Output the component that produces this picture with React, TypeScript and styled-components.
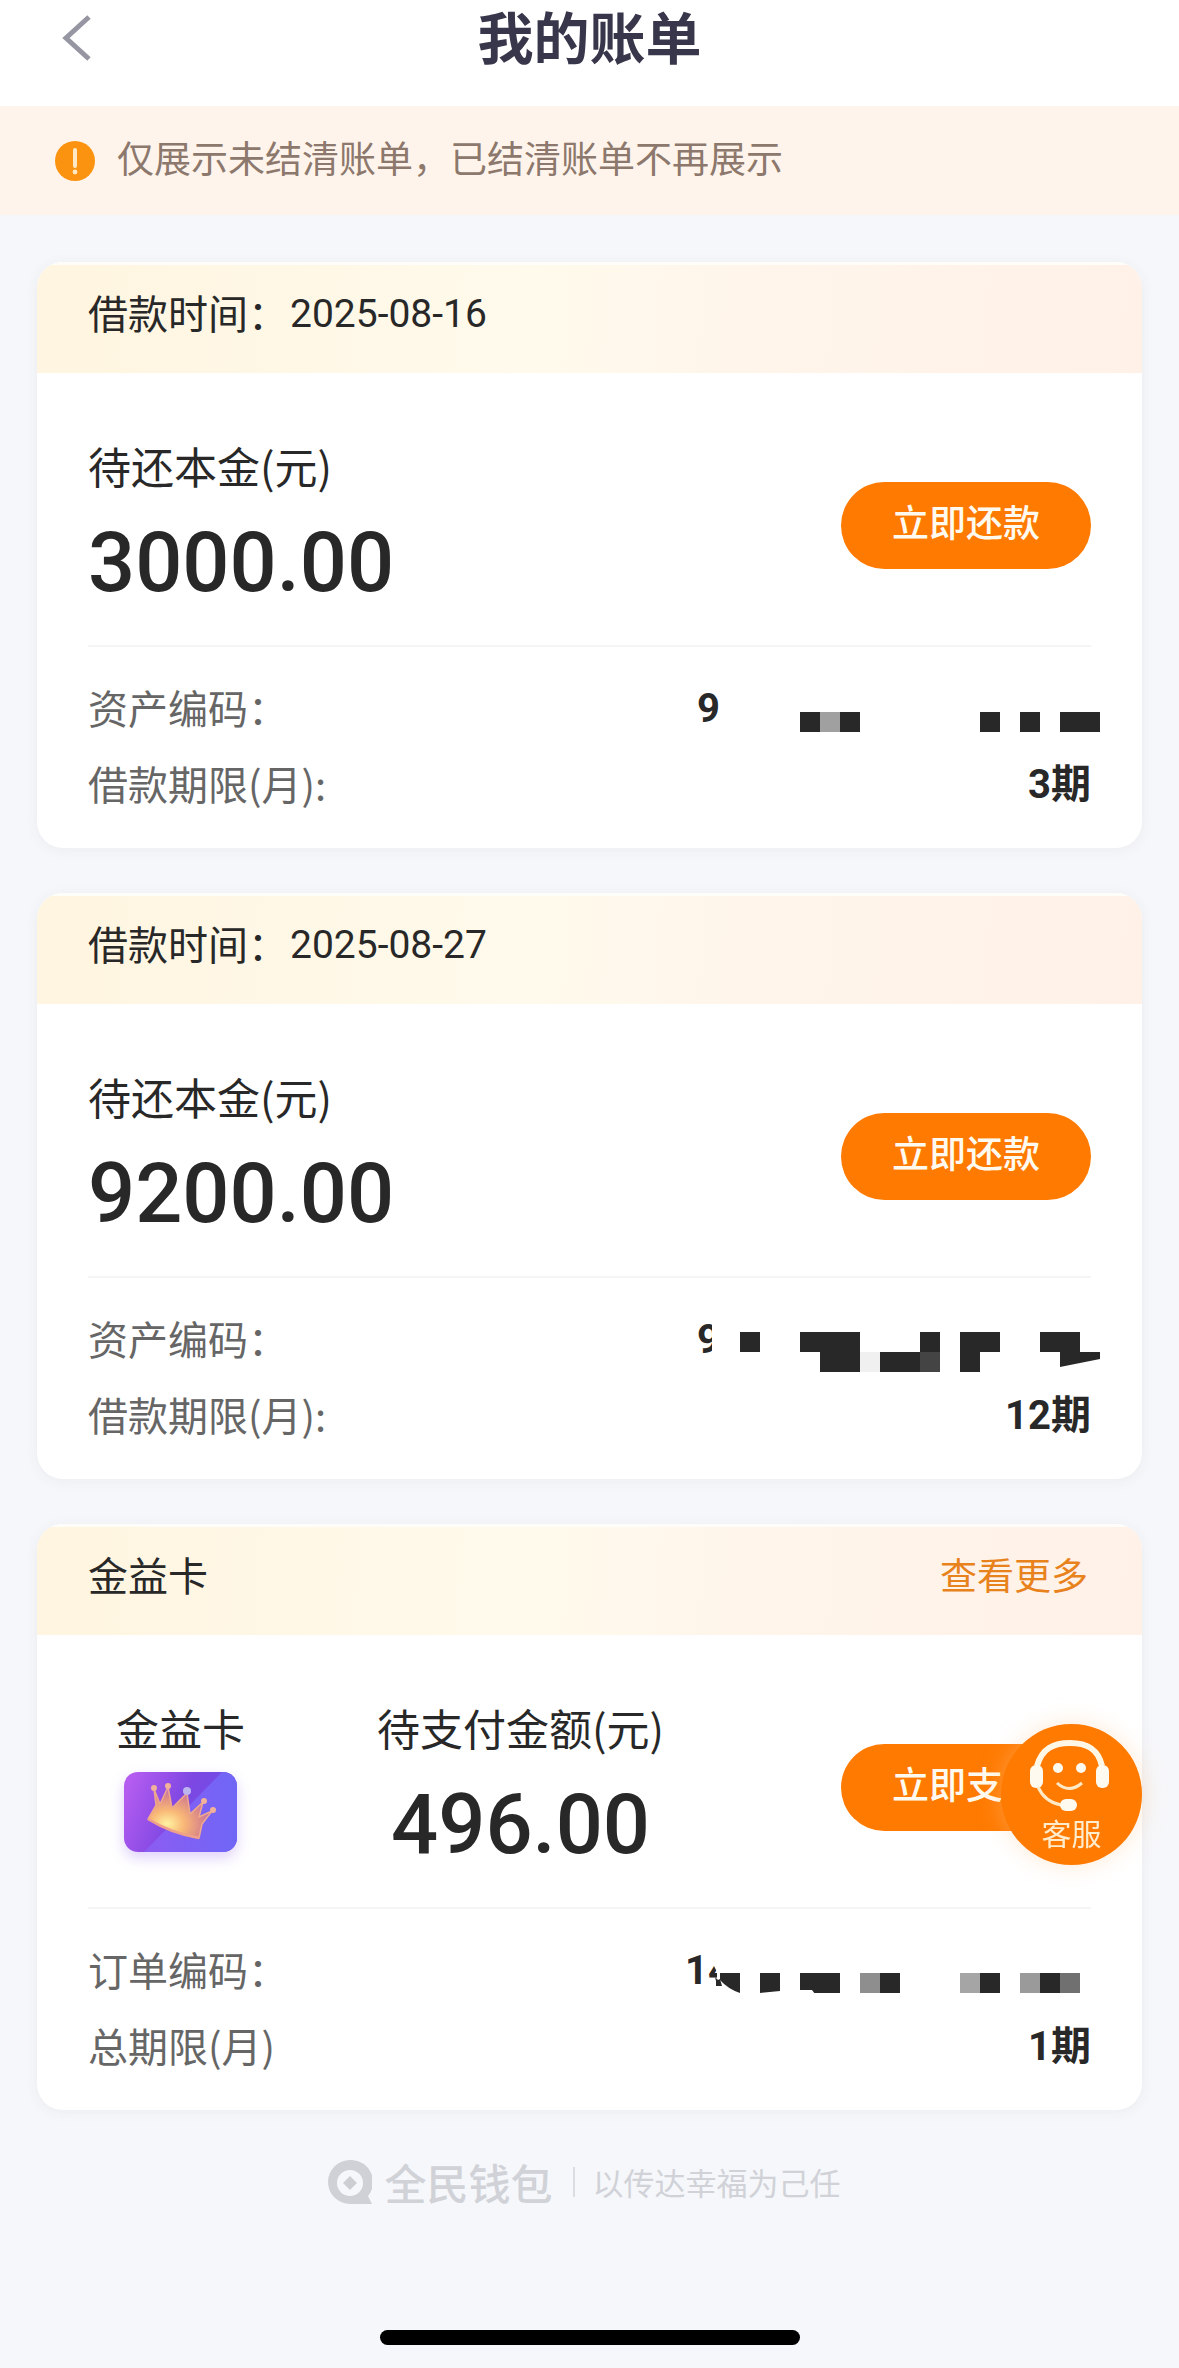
import React from "react";
import styled, { createGlobalStyle } from "styled-components";

const GlobalStyle = createGlobalStyle`
  * { box-sizing: border-box; }
  body {
    margin: 0;
    background: #f6f7fa;
    font-family: "Noto Sans CJK SC", sans-serif;
    color: #282828;
  }
  button { font: inherit; border: 0; padding: 0; cursor: pointer; }
  p, h1, h2, dl, dd, dt { margin: 0; font-weight: 400; }
`;

const Page = styled.div`
  display: flex;
  flex-direction: column;
  min-height: 100vh;
`;

const TopBar = styled.header`
  display: grid;
  grid-template-columns: 100px 1fr 100px;
  align-items: center;
  height: 106px;
  padding-bottom: 36px;
  background: #fff;
`;

const BackButton = styled.button`
  display: flex;
  justify-content: flex-end;
  padding: 6px 8px 0 0;
  background: none;
`;

const Title = styled.h1`
  font-size: 56px;
  line-height: 60px;
  font-weight: 700;
  text-align: center;
  color: #37364a;
`;

const Notice = styled.section`
  display: flex;
  align-items: center;
  gap: 22px;
  height: 109px;
  padding: 0 55px;
  background: #fff4eb;
`;

const NoticeText = styled.p`
  font-size: 37px;
  line-height: 48px;
  padding-bottom: 8px;
  color: #8c786c;
`;

const CardList = styled.main`
  display: flex;
  flex-direction: column;
  gap: 45px;
  padding: 47px 37px 0;
`;

const Card = styled.section`
  border-radius: 26px;
  background: #fff;
  box-shadow: 0 2px 14px rgba(60, 70, 90, 0.06);
  overflow: hidden;
`;

const CardHeader = styled.div`
  display: flex;
  justify-content: space-between;
  align-items: center;
  height: 111px;
  padding: 0 51px 15px;
  border-top: 3px solid #fffdfa;
  background: linear-gradient(95deg, #fff5e0 0%, #fffaec 45%, #fff5eb 65%, #fff1e8 100%);
`;

const CardTitle = styled.h2`
  display: flex;
  align-items: center;
  font-size: 40px;
  line-height: 48px;
`;

const DateText = styled.time`
  margin: 4px 0 0 2px;
  font-family: Roboto, sans-serif;
  font-size: 39px;
`;

const MoreLink = styled.a`
  padding-right: 3px;
  font-size: 37px;
  line-height: 48px;
  color: #e8821c;
  text-decoration: none;
`;

const Summary = styled.div`
  display: flex;
  align-items: center;
  height: 274px;
  margin: 0 51px;
  padding-top: 32px;
  border-bottom: 2px solid #f5f5f6;
`;

const Product = styled.div`
  display: flex;
  flex-direction: column;
  align-items: center;
  gap: 20px;
  margin: 0 132px 0 28px;
  padding-bottom: 20px;
`;

const AmountBlock = styled.div<{ $centered?: boolean }>`
  display: flex;
  flex-direction: column;
  align-items: ${(p) => (p.$centered ? "center" : "flex-start")};
  gap: 25px;
`;

const Label = styled.p`
  font-size: 43px;
  line-height: 50px;
`;

const Amount = styled.p`
  font-family: Roboto, sans-serif;
  font-size: 83px;
  line-height: 96px;
  font-weight: 500;
`;

const PayButton = styled.button`
  width: 250px;
  height: 87px;
  margin-left: auto;
  padding-bottom: 8px;
  border-radius: 44px;
  background: #ff7a00;
  color: #fffaf0;
  font-size: 37px;
  font-weight: 500;
`;

const Details = styled.dl`
  padding: 24px 51px 25px;
`;

const DetailRow = styled.div`
  display: flex;
  justify-content: space-between;
  align-items: center;
  height: 76px;
`;

const Term = styled.dt`
  padding-bottom: 5px;
  font-size: 40px;
  color: #666;
`;

const Value = styled.dd`
  display: flex;
  align-items: center;
  font-family: Roboto, "Noto Sans CJK SC", sans-serif;
  font-size: 40px;
  line-height: 48px;
  font-weight: 700;
`;

const MaskDrawing = styled.svg`
  margin-right: -9px;
  overflow: visible;
`;

const ProductIcon = styled.svg`
  border-radius: 14px;
  box-shadow: 0 6px 14px rgba(130, 70, 240, 0.25);
`;

const ServiceButton = styled.button`
  position: fixed;
  right: 37px;
  bottom: 503px;
  display: flex;
  flex-direction: column;
  align-items: center;
  width: 141px;
  height: 141px;
  padding-top: 14px;
  border-radius: 50%;
  background: #ff7a00;
  color: #ffeccd;
  font-size: 30px;
  line-height: 36px;
  box-shadow: 0 0 24px rgba(255, 200, 150, 0.4);
`;

const Footer = styled.footer`
  display: flex;
  flex: 1;
  flex-direction: column;
  align-items: center;
  justify-content: space-between;
  padding: 47px 0 23px;
`;

const Brand = styled.div`
  display: flex;
  align-items: center;
  padding-right: 10px;
  color: #d0d2d8;
`;

const BrandName = styled.strong`
  margin-left: 12px;
  font-size: 42px;
  line-height: 50px;
  font-weight: 500;
`;

const Slogan = styled.span`
  margin-left: 20px;
  padding-left: 18px;
  border-left: 2px solid #dcdde2;
  font-size: 31px;
  line-height: 30px;
`;

const HomeIndicator = styled.div`
  width: 420px;
  height: 15px;
  border-radius: 8px;
  background: #000;
`;

const INK = "#282828";

type Block = { x: number; y: number; w: number; fill?: string };

interface MaskedCodeProps {
  text: string;
  start: number;
  blocks: Block[];
  children?: React.ReactNode;
}

/* A partly hidden code: its first digits, then a mosaic on a 20px grid. */
function MaskedCode({ text, start, blocks, children }: MaskedCodeProps) {
  return (
    <Value>
      {text}
      <MaskDrawing
        width={400 - start}
        height={60}
        viewBox={`${start} 0 ${400 - start} 60`}
        shapeRendering="crispEdges"
        aria-hidden="true"
      >
        {blocks.map((b) => (
          <rect key={`${b.x}-${b.y}`} x={b.x} y={b.y} width={b.w} height={20} fill={b.fill ?? INK} />
        ))}
        {children}
      </MaskDrawing>
    </Value>
  );
}

interface LoanCardProps {
  date: string;
  principal: string;
  months: string;
  code: React.ReactNode;
}

function LoanCard({ date, principal, months, code }: LoanCardProps) {
  return (
    <Card>
      <CardHeader>
        <CardTitle>
          借款时间：<DateText dateTime={date}>{date}</DateText>
        </CardTitle>
      </CardHeader>
      <Summary>
        <AmountBlock>
          <Label>待还本金(元)</Label>
          <Amount>{principal}</Amount>
        </AmountBlock>
        <PayButton type="button">立即还款</PayButton>
      </Summary>
      <Details>
        <DetailRow>
          <Term>资产编码：</Term>
          {code}
        </DetailRow>
        <DetailRow>
          <Term>借款期限(月):</Term>
          <Value>{months}</Value>
        </DetailRow>
      </Details>
    </Card>
  );
}

function CrownIcon() {
  return (
    <ProductIcon width="113" height="80" viewBox="0 0 113 80" aria-hidden="true">
      <defs>
        <linearGradient id="tile" x1="0" y1="0.3" x2="1" y2="0.6">
          <stop offset="0" stopColor="#b45cf0" />
          <stop offset="0.5" stopColor="#7d47e2" />
          <stop offset="1" stopColor="#6a50ea" />
        </linearGradient>
        <linearGradient id="sheen" x1="0" y1="0.5" x2="1" y2="0.5">
          <stop offset="0" stopColor="#8d5cf2" />
          <stop offset="1" stopColor="#6f66f6" />
        </linearGradient>
        <radialGradient id="gold" cx="0.3" cy="0.72" r="0.75">
          <stop offset="0" stopColor="#fff3a0" />
          <stop offset="0.35" stopColor="#f9b877" />
          <stop offset="0.7" stopColor="#dc8a86" />
          <stop offset="1" stopColor="#b565cc" />
        </radialGradient>
      </defs>
      <rect width="113" height="80" fill="url(#tile)" />
      <path d="M98 0H113V80H20Z" fill="url(#sheen)" />
      <path
        d="M24 47L32 33L30 17L36 32L44 15L48 36L63 21L66 42L79 30L75 45L88 39L78 52L75 66Q50 61 24 47Z"
        fill="url(#gold)"
        stroke="#efa98c"
        strokeWidth="1.5"
        strokeLinejoin="round"
      />
      <path d="M24 47Q48 62 75 66" fill="none" stroke="#f0a08a" strokeWidth="2.5" />
      <g fill="#f2b19b">
        <circle cx="30" cy="16" r="3" />
        <circle cx="44" cy="14" r="3" />
        <circle cx="80" cy="29" r="3" />
        <circle cx="89" cy="38" r="3" />
      </g>
      <circle cx="63" cy="19" r="4" fill="#bcb4ee" />
    </ProductIcon>
  );
}

function HeadsetIcon() {
  return (
    <svg width="86" height="76" viewBox="0 4 86 76" fill="none" aria-hidden="true">
      <path d="M8 32C13 14 25 9 41 9S69 14 73 32" stroke="#fff7e6" strokeWidth="6" />
      <rect x="1" y="31" width="13" height="23" rx="6" fill="#fffaf0" />
      <rect x="67" y="31" width="13" height="23" rx="6" fill="#fffaf0" />
      <circle cx="29" cy="34" r="5" fill="#fffaf0" />
      <circle cx="52" cy="34" r="5" fill="#fffaf0" />
      <path d="M28 49Q40 60 53 49" stroke="#ffeac8" strokeWidth="3" />
      <path d="M9 53Q16 68 32 71" stroke="#ffeac8" strokeWidth="3" />
      <rect x="31" y="65" width="17" height="12" rx="6" fill="#fffaf0" />
    </svg>
  );
}

export default function App() {
  return (
    <>
      <GlobalStyle />
      <Page>
        <TopBar>
          <BackButton type="button" aria-label="返回">
            <svg width="30" height="48" viewBox="0 0 30 48" aria-hidden="true">
              <path d="M27 3L4 24L27 45" fill="none" stroke="#9696a2" strokeWidth="5" />
            </svg>
          </BackButton>
          <Title>我的账单</Title>
        </TopBar>

        <Notice>
          <svg width="40" height="40" viewBox="0 0 40 40" aria-hidden="true">
            <circle cx="20" cy="20" r="20" fill="#fb9310" />
            <path d="M20 9V25" stroke="#ffe9c4" strokeWidth="4" strokeLinecap="round" />
            <circle cx="20" cy="31" r="2.4" fill="#ffe9c4" />
          </svg>
          <NoticeText>仅展示未结清账单，已结清账单不再展示</NoticeText>
        </Notice>

        <CardList>
          <LoanCard
            date="2025-08-16"
            principal="3000.00"
            months="3期"
            code={
              <MaskedCode
                text="9"
                start={20}
                blocks={[
                  { x: 100, y: 33, w: 20 },
                  { x: 120, y: 33, w: 20, fill: "#a0a0a0" },
                  { x: 140, y: 33, w: 20 },
                  { x: 280, y: 33, w: 20 },
                  { x: 320, y: 33, w: 20 },
                  { x: 360, y: 33, w: 40 },
                ]}
              />
            }
          />
          <LoanCard
            date="2025-08-27"
            principal="9200.00"
            months="12期"
            code={
              <MaskedCode
                text="9"
                start={20}
                blocks={[
                  { x: 40, y: 22, w: 20 },
                  { x: 100, y: 22, w: 60 },
                  { x: 120, y: 42, w: 40 },
                  { x: 160, y: 42, w: 20, fill: "#f0f0f0" },
                  { x: 180, y: 42, w: 40 },
                  { x: 220, y: 22, w: 20 },
                  { x: 220, y: 42, w: 20, fill: "#444" },
                  { x: 260, y: 22, w: 40 },
                  { x: 260, y: 42, w: 20 },
                  { x: 340, y: 22, w: 40 },
                ]}
              >
                <path d="M360 42H400V49L360 57Z" fill={INK} shapeRendering="auto" />
                <rect x="12" y="10" width="10" height="40" fill="#fff" />
              </MaskedCode>
            }
          />
          <Card>
            <CardHeader>
              <CardTitle>金益卡</CardTitle>
              <MoreLink href="#more">查看更多</MoreLink>
            </CardHeader>
            <Summary>
              <Product>
                <Label>金益卡</Label>
                <CrownIcon />
              </Product>
              <AmountBlock $centered>
                <Label>待支付金额(元)</Label>
                <Amount>496.00</Amount>
              </AmountBlock>
              <PayButton type="button">立即支付</PayButton>
            </Summary>
            <Details>
              <DetailRow>
                <Term>订单编码：</Term>
                <MaskedCode
                  text="14"
                  start={31}
                  blocks={[
                    { x: 60, y: 32, w: 20 },
                    { x: 100, y: 32, w: 40 },
                    { x: 160, y: 32, w: 20, fill: "#8e8e8e" },
                    { x: 180, y: 32, w: 20 },
                    { x: 260, y: 32, w: 20, fill: "#a5a5a5" },
                    { x: 280, y: 32, w: 20 },
                    { x: 320, y: 32, w: 20, fill: "#9a9a9a" },
                    { x: 340, y: 32, w: 20 },
                    { x: 360, y: 32, w: 20, fill: "#707070" },
                  ]}
                >
                  <g shapeRendering="auto">
                    <path d="M6 8H36V50H24L17 40V31L13 23L6 24Z" fill="#fff" />
                    <path d="M15 36L18 39L20 38L22 45H16V40Z" fill={INK} />
                    <path d="M20 32H40V52Q28 48 20 39Z" fill={INK} />
                    <path d="M60 53V52L80 50V53ZM99 53V49H112L115 53Z" fill="#fff" />
                  </g>
                </MaskedCode>
              </DetailRow>
              <DetailRow>
                <Term>总期限(月)</Term>
                <Value>1期</Value>
              </DetailRow>
            </Details>
          </Card>
        </CardList>

        <Footer>
          <Brand>
            <svg width="44" height="44" viewBox="0 0 44 44" aria-hidden="true">
              <path
                fillRule="evenodd"
                d="M22 0A22 22 0 1 0 22 44H44L40 36A22 22 0 0 0 22 0ZM22 10A13 13 0 1 1 22 36A13 13 0 1 1 22 10Z"
                fill="#d0d1d6"
              />
              <path d="M22 16L29 23L22 30L15 23Z" fill="#cdced4" />
            </svg>
            <BrandName>全民钱包</BrandName>
            <Slogan>以传达幸福为己任</Slogan>
          </Brand>
          <HomeIndicator />
        </Footer>
      </Page>
      <ServiceButton type="button">
        <HeadsetIcon />
        客服
      </ServiceButton>
    </>
  );
}
